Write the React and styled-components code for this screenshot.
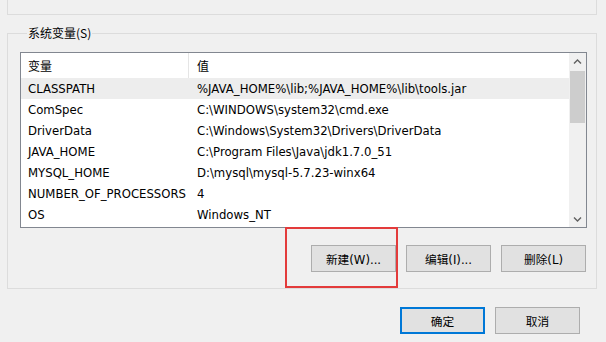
import React from "react";
import styled, { createGlobalStyle } from "styled-components";

const GlobalStyle = createGlobalStyle`
  html, body {
    margin: 0;
    padding: 0;
    background: #f0f0f0;
  }
  body {
    font-family: "DejaVu Sans", "Noto Sans CJK SC", sans-serif;
    font-size: 11.7px;
    color: #000;
  }
`;

const Page = styled.div`
  position: relative;
  width: 606px;
  height: 342px;
  overflow: hidden;
  padding: 0 9px 0 7px;
  box-sizing: border-box;
`;

const PrevGroup = styled.div`
  height: 14px;
  border: 1px solid #dcdcdc;
  border-top: none;
`;

const Group = styled.fieldset`
  margin: 10px 0 0;
  padding: 0 9px 16px 12px;
  border: 1px solid #dcdcdc;
  min-width: 0;
`;

const Legend = styled.legend`
  margin-left: 7px;
  padding: 0 1px;
  line-height: 16px;
  font-size: 12px;
  font-family: "Noto Sans CJK SC", sans-serif;
`;

const List = styled.div`
  margin-top: 11px;
  height: 176px;
  border: 1px solid #828790;
  background: #fff;
  display: flex;
  box-sizing: border-box;
`;

const Table = styled.div`
  flex: 1;
  display: flex;
  flex-direction: column;
`;

const Row = styled.div`
  display: grid;
  grid-template-columns: 168px 1fr;
  height: ${(p) => (p.$head ? 25 : 21)}px;
  align-items: center;
  background: ${(p) => (p.$selected ? "#ededed" : "transparent")};
  white-space: nowrap;
`;

const Cell = styled.div`
  height: 100%;
  display: flex;
  align-items: center;
  padding-left: ${(p) => (p.$first ? 7 : 8)}px;
  border-right: ${(p) => (p.$divider ? "1px solid #e5e5e5" : "none")};
  font-family: ${(p) =>
    p.$cjk ? '"Noto Sans CJK SC", sans-serif' : 'inherit'};
  font-size: ${(p) => (p.$cjk ? "12px" : "inherit")};
`;

const Scrollbar = styled.div`
  width: 17px;
  background: #f0f0f0;
  display: flex;
  flex-direction: column;
  align-items: center;
`;

const ArrowBtn = styled.div`
  height: 17px;
  width: 17px;
  display: flex;
  align-items: center;
  justify-content: center;
`;

const Track = styled.div`
  flex: 1;
  width: 100%;
  display: flex;
  justify-content: center;
`;

const Thumb = styled.div`
  width: 15px;
  height: 52px;
  margin-top: 1px;
  background: #cdcdcd;
`;

const ButtonRow = styled.div`
  display: flex;
  justify-content: flex-end;
  gap: 10px;
  margin-top: 17px;
  padding-right: 1px;
`;

const Button = styled.button`
  width: 85px;
  height: 27px;
  padding: 0;
  background: #e1e1e1;
  border: ${(p) => (p.$default ? "2px solid #0078d7" : "1px solid #adadad")};
  font-family: "DejaVu Sans", "Noto Sans CJK SC", sans-serif;
  font-size: 11.7px;
  color: #000;
`;

const Footer = styled.div`
  display: flex;
  justify-content: flex-end;
  gap: 10px;
  margin-top: 18px;
  padding-right: 17px;
`;

const Mark = styled.div`
  position: absolute;
  left: 285px;
  top: 227px;
  width: 113px;
  height: 61px;
  border: 2px solid #e33b3b;
  box-sizing: border-box;
  pointer-events: none;
`;

const Chevron = ({ down }) => (
  <svg width="9" height="6" viewBox="0 0 9 6">
    <path
      d={down ? "M1 1.5 L4.5 5 L8 1.5" : "M1 4.5 L4.5 1 L8 4.5"}
      fill="none"
      stroke="#606060"
      strokeWidth="1.4"
    />
  </svg>
);

const vars = [
  ["CLASSPATH", "%JAVA_HOME%\\lib;%JAVA_HOME%\\lib\\tools.jar"],
  ["ComSpec", "C:\\WINDOWS\\system32\\cmd.exe"],
  ["DriverData", "C:\\Windows\\System32\\Drivers\\DriverData"],
  ["JAVA_HOME", "C:\\Program Files\\Java\\jdk1.7.0_51"],
  ["MYSQL_HOME", "D:\\mysql\\mysql-5.7.23-winx64"],
  ["NUMBER_OF_PROCESSORS", "4"],
  ["OS", "Windows_NT"],
];

export default function App() {
  return (
    <Page>
      <GlobalStyle />
      <PrevGroup />
      <Group>
        <Legend>系统变量(S)</Legend>
        <List>
          <Table>
            <Row $head>
              <Cell $first $divider $cjk>变量</Cell>
              <Cell $cjk>值</Cell>
            </Row>
            {vars.map(([name, value], i) => (
              <Row key={name} $selected={i === 0}>
                <Cell $first>{name}</Cell>
                <Cell>{value}</Cell>
              </Row>
            ))}
          </Table>
          <Scrollbar>
            <ArrowBtn>
              <Chevron />
            </ArrowBtn>
            <Track>
              <Thumb />
            </Track>
            <ArrowBtn>
              <Chevron down />
            </ArrowBtn>
          </Scrollbar>
        </List>
        <ButtonRow>
          <Button>新建(W)...</Button>
          <Button>编辑(I)...</Button>
          <Button>删除(L)</Button>
        </ButtonRow>
      </Group>
      <Footer>
        <Button $default>确定</Button>
        <Button>取消</Button>
      </Footer>
      <Mark />
    </Page>
  );
}
